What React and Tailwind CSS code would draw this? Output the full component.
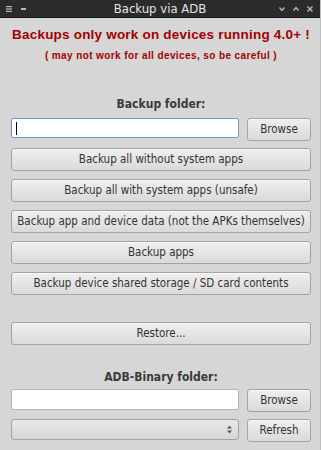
const Btn = ({ children, className = "" }) => (
    <button
        className={`h-[23px] whitespace-nowrap rounded-[3px] border border-[#a3a3a3] bg-gradient-to-b from-[#efefef] to-[#dadada] text-[11.5px] leading-none text-[#333] shadow-[inset_0_1px_0_#f8f8f8] ${className}`}
    >
        {children}
    </button>
);

const App = () => {
    const backupButtons = [
        "Backup all without system apps",
        "Backup all with system apps (unsafe)",
        "Backup app and device data (not the APKs themselves)",
        "Backup apps",
        "Backup device shared storage / SD card contents",
    ];

    return (
        <div className="w-[321px] h-[450px] overflow-hidden bg-[#d6d6d6] flex flex-col font-['DejaVu_Sans_Condensed','Liberation_Sans_Narrow',sans-serif] border-r border-[#bdbdbd]">
            {/* title bar */}
            <div className="h-[18px] shrink-0 bg-[#2b2b2b] flex items-center px-[6px] text-[#dcdcdc] border-b border-[#1a1a1a]">
                <div className="flex items-center gap-[9px] w-[60px]">
                    <svg width="6" height="6" viewBox="0 0 6 6">
                        <rect x="0" y="0" width="6" height="1.2" fill="#bbb" />
                        <rect x="0" y="2.4" width="6" height="1.2" fill="#bbb" />
                        <rect x="0" y="4.8" width="6" height="1.2" fill="#bbb" />
                    </svg>
                    <div className="w-[5px] h-[2px] bg-[#bbb]" />
                </div>
                <div className="flex-1 text-center text-[13px] leading-[17px] text-[#e4e4e4]">Backup via ADB</div>
                <div className="flex items-center gap-[8px] w-[60px] justify-end pr-[1px]">
                    <svg width="6" height="6" viewBox="0 0 6 6">
                        <path d="M0.5 1.5 L3 4.5 L5.5 1.5" stroke="#bbb" strokeWidth="1.3" fill="none" />
                    </svg>
                    <svg width="6" height="6" viewBox="0 0 6 6">
                        <path d="M0.5 4.5 L3 1.5 L5.5 4.5" stroke="#bbb" strokeWidth="1.3" fill="none" />
                    </svg>
                    <svg width="6" height="6" viewBox="0 0 6 6">
                        <path d="M0.5 0.5 L5.5 5.5 M5.5 0.5 L0.5 5.5" stroke="#bbb" strokeWidth="1.4" fill="none" />
                    </svg>
                </div>
            </div>

            <div className="flex flex-col px-[11px] pr-[9px]">
                <div className="mt-[7px] whitespace-nowrap text-center text-[13.5px] leading-[20px] font-bold text-[#a40000] font-['Liberation_Sans',sans-serif] tracking-[0.2px]">
                    Backups only work on devices running 4.0+ !
                </div>
                <div className="mt-[4px] whitespace-nowrap text-center text-[10px] leading-[14px] font-bold text-[#a40000] font-['Liberation_Sans',sans-serif] tracking-[0.4px]">
                    ( may not work for all devices, so be careful )
                </div>

                <div className="mt-[33px] text-center text-[12px] leading-[16px] font-bold text-[#3a3a3a]">Backup folder:</div>
                <div className="mt-[6px] flex gap-[8px]">
                    <div className="flex-1 h-[20px] bg-white border border-[#6f95cc] rounded-[2px] flex items-center pl-[4px]">
                        <div className="w-[1px] h-[13px] bg-black" />
                    </div>
                    <Btn className="w-[64px] h-[21px]">Browse</Btn>
                </div>

                <div className="mt-[7px] flex flex-col gap-[8px]">
                    {backupButtons.map((label) => (
                        <Btn key={label} className="w-full">{label}</Btn>
                    ))}
                </div>

                <Btn className="w-full mt-[27px] h-[22px]">Restore...</Btn>

                <div className="mt-[24px] text-center text-[12px] leading-[16px] font-bold text-[#3a3a3a]">ADB-Binary folder:</div>
                <div className="mt-[4px] flex gap-[8px]">
                    <div className="flex-1 h-[21px] bg-white border border-[#b4b4b4] rounded-[2px]" />
                    <Btn className="w-[64px] h-[21px]">Browse</Btn>
                </div>
                <div className="mt-[7px] flex gap-[8px]">
                    <div className="flex-1 h-[21px] rounded-[3px] border border-[#a3a3a3] bg-gradient-to-b from-[#e8e8e8] to-[#d6d6d6] flex items-center justify-end pr-[6px]">
                        <svg width="5" height="9" viewBox="0 0 5 9">
                            <path d="M0 3.5 L2.5 0.5 L5 3.5 Z M0 5.5 L2.5 8.5 L5 5.5 Z" fill="#555" />
                        </svg>
                    </div>
                    <Btn className="w-[64px] h-[21px]">Refresh</Btn>
                </div>
            </div>
        </div>
    );
};

export default App;
